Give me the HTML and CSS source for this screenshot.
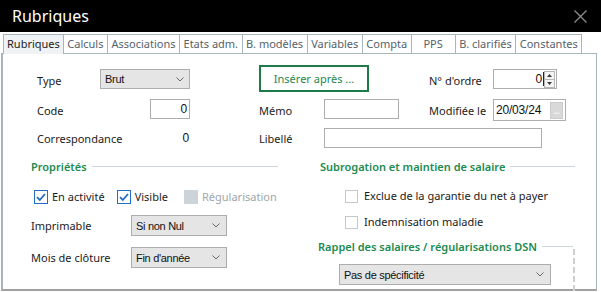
FILE: index.html
```html
<!DOCTYPE html>
<html lang="fr">
<head>
<meta charset="utf-8">
<title>Rubriques</title>
<link rel="stylesheet" href="styles.css">
</head>
<body>
<header class="titlebar">
  <span class="title">Rubriques</span>
  <svg class="close" viewBox="0 0 13 13" width="13" height="13"><path d="M0.5 0.5 L12.5 12.5 M12.5 0.5 L0.5 12.5" stroke="#8a8a8a" stroke-width="1.4" fill="none"/></svg>
</header>
<nav class="tabs">
  <span class="tab active">Rubriques</span>
  <span class="tab">Calculs</span>
  <span class="tab">Associations</span>
  <span class="tab">Etats adm.</span>
  <span class="tab">B. modèles</span>
  <span class="tab">Variables</span>
  <span class="tab">Compta</span>
  <span class="tab wide">PPS</span>
  <span class="tab">B. clarifiés</span>
  <span class="tab">Constantes</span>
</nav>
<section class="panel">
  <div class="top-grid">
    <span class="lbl r1 c1">Type</span>
    <div class="select sel-type c2"><span>Brut</span><svg class="chev" viewBox="0 0 8 5" width="8" height="5"><path d="M0.5 0.5 L4 4 L7.5 0.5" stroke="#6a6a6a" fill="none"/></svg></div>
    <button class="insert">Insérer après ...</button>
    <span class="lbl r1 c6">N° d'ordre</span>
    <div class="spin c7"><span class="val">0</span><span class="caret"></span><svg class="spin-btns" viewBox="0 0 11 17" width="11" height="17"><rect x="0.5" y="0.5" width="10" height="16" fill="#f4f4f4" stroke="#b4b4b4"/><path d="M0.5 8.5 H10.5" stroke="#b4b4b4"/><path d="M3 6 L5.5 3 L8 6 Z" fill="#3a3a3a"/><path d="M3 11 L5.5 14 L8 11 Z" fill="#3a3a3a"/></svg></div>

    <span class="lbl c1">Code</span>
    <div class="field code c2"><span class="val">0</span></div>
    <span class="lbl c4">Mémo</span>
    <div class="field memo c5"></div>
    <span class="lbl c6">Modifiée le</span>
    <div class="field date c7"><span class="val">20/03/24</span><span class="dots">...</span></div>

    <span class="lbl c1">Correspondance</span>
    <span class="val corr c2">0</span>
    <span class="lbl c4">Libellé</span>
    <div class="field libelle"></div>
  </div>

  <div class="lower">
    <div class="col">
      <h3 class="heading">Propriétés</h3>
      <div class="checks">
        <label class="check"><span class="cb on"><svg viewBox="0 0 12 12" width="12" height="12"><path d="M2 6.2 L4.8 9 L10 3" stroke="#1f6fc6" stroke-width="1.8" fill="none"/></svg></span>En activité</label>
        <label class="check"><span class="cb on"><svg viewBox="0 0 12 12" width="12" height="12"><path d="M2 6.2 L4.8 9 L10 3" stroke="#1f6fc6" stroke-width="1.8" fill="none"/></svg></span>Visible</label>
        <label class="check disabled"><span class="cb off"></span>Régularisation</label>
      </div>
      <div class="row">
        <span class="lbl">Imprimable</span>
        <div class="select sel-small"><span>Si non Nul</span><svg class="chev" viewBox="0 0 8 5" width="8" height="5"><path d="M0.5 0.5 L4 4 L7.5 0.5" stroke="#6a6a6a" fill="none"/></svg></div>
      </div>
      <div class="row">
        <span class="lbl">Mois de clôture</span>
        <div class="select sel-small"><span>Fin d'année</span><svg class="chev" viewBox="0 0 8 5" width="8" height="5"><path d="M0.5 0.5 L4 4 L7.5 0.5" stroke="#6a6a6a" fill="none"/></svg></div>
      </div>
    </div>
    <div class="col">
      <h3 class="heading sub">Subrogation et maintien de salaire</h3>
      <label class="check plain first"><span class="cb empty"></span>Exclue de la garantie du net à payer</label>
      <label class="check plain"><span class="cb empty"></span>Indemnisation maladie</label>
      <h3 class="heading dsn">Rappel des salaires / régularisations DSN</h3>
      <div class="dsn-body">
        <div class="select sel-dsn"><span>Pas de spécificité</span><svg class="chev" viewBox="0 0 8 5" width="8" height="5"><path d="M0.5 0.5 L4 4 L7.5 0.5" stroke="#6a6a6a" fill="none"/></svg></div>
      </div>
    </div>
  </div>
</section>
</body>
</html>
```
FILE: styles.css
```css
* { box-sizing: border-box; }

body {
  margin: 0;
  width: 601px;
  height: 292px;
  overflow: hidden;
  background: #fff;
  font-family: "Noto Sans", sans-serif;
  font-size: 11px;
  color: #1b1b1b;
}

.titlebar {
  height: 32px;
  background: #000;
  display: flex;
  align-items: center;
  justify-content: space-between;
  padding: 0 14px 0 12px;
}
.title { color: #fff; font-size: 16px; line-height: 22px; }
.close { display: block; }

.tabs {
  display: flex;
  align-items: flex-start;
  margin-top: 2px;
  padding-left: 3px;
  height: 19px;
}
.tab {
  height: 19px;
  line-height: 17px;
  padding: 0 3.5px;
  border: 1px solid #a9b5bd;
  border-left: none;
  border-bottom: none;
  color: #56626a;
  white-space: nowrap;
  text-align: center;
}
.tab:first-child { border-left: 1px solid #a9b5bd; padding: 0 3px; }
.tab.wide { min-width: 44px; }
.tab.active {
  color: #1b1b1b;
  background: #f0f3f5;
  height: 20px;
  position: relative;
  z-index: 1;
}

.panel {
  margin-left: 1px;
  width: 596px;
  height: 238px;
  border-top: 1px solid #a9b5bd;
  border-left: 2px solid #a9b4ba;
  border-right: 1px solid #a9b5bd;
  border-bottom: 2px solid #a0a0a0;
  padding-top: 11px;
}

.top-grid {
  display: grid;
  grid-template-columns: 63px 90px 69px 65px 105px 64px 73px;
  grid-template-rows: 27px 22px 20px;
  row-gap: 7px;
  margin-left: 34px;
  align-items: center;
}
.lbl { line-height: 15px; white-space: nowrap; }
.r1 { margin-top: 4px; }
.c1 { grid-column: 1; }
.c2 { grid-column: 2; }
.c4 { grid-column: 4; }
.c5 { grid-column: 5; }
.c6 { grid-column: 6; }
.c7 { grid-column: 7; }

.val {
  font-family: "Liberation Sans", sans-serif;
  font-size: 12px;
  letter-spacing: -0.2px;
  color: #111;
}

.select {
  display: flex;
  align-items: center;
  justify-content: space-between;
  height: 21px;
  padding: 0 6px 0 4px;
  background: #e5e5e5;
  border: 1px solid #adadad;
  font-family: "Liberation Sans", sans-serif;
  font-size: 11px;
  letter-spacing: -0.3px;
  color: #111;
}
.chev { display: block; }
.sel-type { width: 90px; height: 20px; margin-top: 1px; padding-right: 5px; }
.sel-small { width: 96px; }
.sel-dsn { width: 212px; }

.insert {
  grid-column: 4 / 6;
  justify-self: start;
  width: 110px;
  height: 27px;
  background: #fff;
  border: 2px solid #1f7a4a;
  color: #248650;
  font-family: "Noto Sans", sans-serif;
  font-size: 11px;
  padding: 0;
}

.spin {
  width: 64px;
  height: 20px;
  margin-top: 1px;
  border: 1px solid #adadad;
  display: flex;
  align-items: center;
  justify-content: flex-end;
  padding-right: 1px;
}
.caret { width: 1px; height: 14px; background: #222; margin: 0 0 0 1px; }
.spin-btns { display: block; }

.field {
  height: 20px;
  border: 1px solid #adadad;
  background: #fff;
}
.code {
  align-self: start;
  justify-self: end;
  width: 40px;
  display: flex;
  align-items: center;
  justify-content: flex-end;
  padding-right: 2px;
}
.memo { align-self: start; width: 75px; }
.date {
  width: 73px;
  height: 22px;
  display: flex;
  align-items: center;
  justify-content: space-between;
  padding: 0 2px 0 2px;
}
.dots {
  width: 13px;
  height: 17px;
  background: #d9d9d9;
  border: 1px solid #cbcbcb;
  color: #f7f7f7;
  font-family: "Liberation Sans", sans-serif;
  font-size: 9px;
  font-weight: bold;
  line-height: 17px;
  letter-spacing: -0.5px;
  text-align: center;
  overflow: hidden;
}
.corr { justify-self: end; padding-right: 1px; }
.libelle { grid-column: 5 / 8; width: 218px; height: 20px; }

.lower {
  display: grid;
  grid-template-columns: 247px 257px;
  column-gap: 40px;
  margin: 12px 0 0 28px;
}

.heading {
  display: flex;
  align-items: center;
  gap: 5px;
  margin: 0;
  height: 14px;
  line-height: 14px;
  font-size: 11px;
  font-weight: 600;
  color: #1d8a50;
  white-space: nowrap;
}
.heading::after {
  content: "";
  flex: 1;
  height: 1px;
  margin-top: -2px;
  background: #cdd4d8;
}
.heading.sub { margin-left: 2px; }
.heading.dsn { margin: 11px 2px 0 0; }

.checks {
  display: flex;
  align-items: center;
  gap: 12px;
  margin: 16px 0 0 3px;
}
.check {
  display: flex;
  align-items: center;
  gap: 4px;
  line-height: 14px;
  white-space: nowrap;
}
.check.disabled { color: #9ea6ab; margin-left: 4px; }
.cb {
  width: 14px;
  height: 14px;
  display: flex;
  align-items: center;
  justify-content: center;
}
.cb.on { border: 1px solid #1f6fc6; background: #fff; }
.cb.off { background: #cdd4d9; }
.cb.empty { width: 13px; height: 13px; border: 1px solid #c3c8cc; background: #fff; }

.check.plain { margin-left: 27px; gap: 6px; margin-top: 12px; }
.check.plain.first { margin-top: 15px; }

.row {
  display: grid;
  grid-template-columns: 100px auto;
  align-items: center;
  margin-top: 11px;
}

.dsn-body {
  margin-top: -5px;
  padding: 15px 0 0 21px;
  height: 42px;
  border-right: 2px dashed #cfcfcf;
}
```
